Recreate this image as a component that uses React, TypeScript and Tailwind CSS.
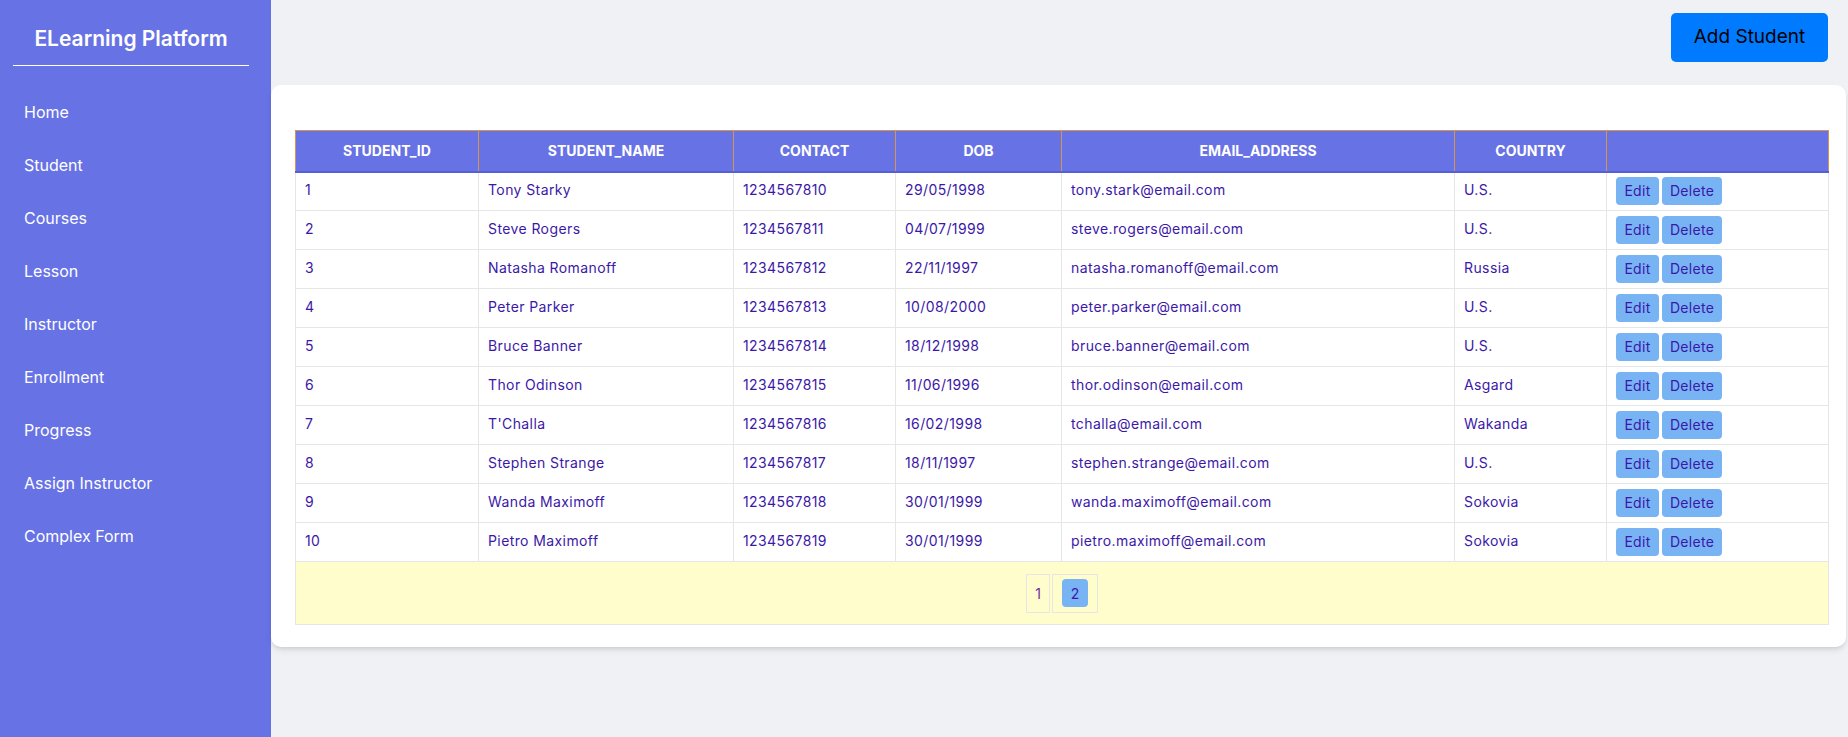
import React from 'react';

const navItems = [
  'Home',
  'Student',
  'Courses',
  'Lesson',
  'Instructor',
  'Enrollment',
  'Progress',
  'Assign Instructor',
  'Complex Form',
];

const columns = [
  { label: 'STUDENT_ID', width: 183 },
  { label: 'STUDENT_NAME', width: 255 },
  { label: 'CONTACT', width: 162 },
  { label: 'DOB', width: 166 },
  { label: 'EMAIL_ADDRESS', width: 393 },
  { label: 'COUNTRY', width: 152 },
  { label: '', width: 222 },
];

const students = [
  { id: 1, name: 'Tony Starky', contact: '1234567810', dob: '29/05/1998', email: 'tony.stark@email.com', country: 'U.S.' },
  { id: 2, name: 'Steve Rogers', contact: '1234567811', dob: '04/07/1999', email: 'steve.rogers@email.com', country: 'U.S.' },
  { id: 3, name: 'Natasha Romanoff', contact: '1234567812', dob: '22/11/1997', email: 'natasha.romanoff@email.com', country: 'Russia' },
  { id: 4, name: 'Peter Parker', contact: '1234567813', dob: '10/08/2000', email: 'peter.parker@email.com', country: 'U.S.' },
  { id: 5, name: 'Bruce Banner', contact: '1234567814', dob: '18/12/1998', email: 'bruce.banner@email.com', country: 'U.S.' },
  { id: 6, name: 'Thor Odinson', contact: '1234567815', dob: '11/06/1996', email: 'thor.odinson@email.com', country: 'Asgard' },
  { id: 7, name: "T'Challa", contact: '1234567816', dob: '16/02/1998', email: 'tchalla@email.com', country: 'Wakanda' },
  { id: 8, name: 'Stephen Strange', contact: '1234567817', dob: '18/11/1997', email: 'stephen.strange@email.com', country: 'U.S.' },
  { id: 9, name: 'Wanda Maximoff', contact: '1234567818', dob: '30/01/1999', email: 'wanda.maximoff@email.com', country: 'Sokovia' },
  { id: 10, name: 'Pietro Maximoff', contact: '1234567819', dob: '30/01/1999', email: 'pietro.maximoff@email.com', country: 'Sokovia' },
];

function Sidebar() {
  return (
    <aside className="w-[271px] shrink-0 bg-[#6772e5] text-white">
      <div className="ml-[13px] w-[236px] border-b border-white pt-[27px] pb-[14px] text-center">
        <h1 className="text-[21px] font-semibold leading-[24px]">ELearning Platform</h1>
      </div>
      <nav className="mt-5">
        {navItems.map((item) => (
          <div key={item} className="flex h-[53px] items-center px-6 pb-[1px] text-[16px]">
            {item}
          </div>
        ))}
      </nav>
    </aside>
  );
}

function StudentTable() {
  const base = 'border border-[#e6e6e6] pl-[9px] h-[39px] text-[14px] tracking-[0.4px] text-[#3b18a8]';
  const cell = `${base} pb-[3px]`;
  const btn = 'h-[28px] rounded bg-[#78b4f4] pb-[1px] text-[14px] tracking-[0.3px] text-[#3b18a8]';
  return (
    <table className="table-fixed border-collapse w-[1533px]">
      <colgroup>
        {columns.map((c, i) => (
          <col key={i} style={{ width: c.width }} />
        ))}
      </colgroup>
      <thead>
        <tr className="bg-[#6772e5]">
          {columns.map((c, i) => (
            <th
              key={i}
              className="h-[41px] border border-[#d8944c] border-b-2 border-b-[#5560d8] text-center text-[14px] font-bold text-white"
            >
              {c.label}
            </th>
          ))}
        </tr>
      </thead>
      <tbody>
        {students.map((s) => (
          <tr key={s.id}>
            <td className={cell}>{s.id}</td>
            <td className={cell}>{s.name}</td>
            <td className={cell}>{s.contact}</td>
            <td className={cell}>{s.dob}</td>
            <td className={cell}>{s.email}</td>
            <td className={cell}>{s.country}</td>
            <td className={base}>
              <div className="flex gap-[3px]">
                <button className={`${btn} w-[43px]`}>Edit</button>
                <button className={`${btn} w-[60px]`}>Delete</button>
              </div>
            </td>
          </tr>
        ))}
        <tr>
          <td colSpan={7} className="h-[63px] border border-[#e6e6e6] bg-[#fffdcc]">
            <ul className="flex justify-center gap-[2px]">
              <li className="flex h-[39px] w-[24px] items-center justify-center border border-[#e6e6e6] text-[14px] text-[#6b2fa0]">
                1
              </li>
              <li className="flex h-[39px] w-[46px] items-center justify-center border border-[#e6e6e6]">
                <span className="flex h-[28px] w-[26px] items-center justify-center rounded bg-[#78b4f4] text-[14px] text-[#3b18a8]">
                  2
                </span>
              </li>
            </ul>
          </td>
        </tr>
      </tbody>
    </table>
  );
}

export default function App() {
  return (
    <div className="flex h-[737px] font-['Inter',sans-serif]">
      <Sidebar />
      <main className="flex-1 bg-[#f0f1f5]">
        <div className="flex justify-end pt-[13px] pr-5">
          <button className="h-[49px] w-[157px] rounded-[5px] bg-[#007bff] text-[19px] text-black">
            Add Student
          </button>
        </div>
        <div className="mt-[23px] mr-[2px] rounded-[10px] bg-white pt-[45px] pb-[22px] pl-6 shadow-md">
          <StudentTable />
        </div>
      </main>
    </div>
  );
}
